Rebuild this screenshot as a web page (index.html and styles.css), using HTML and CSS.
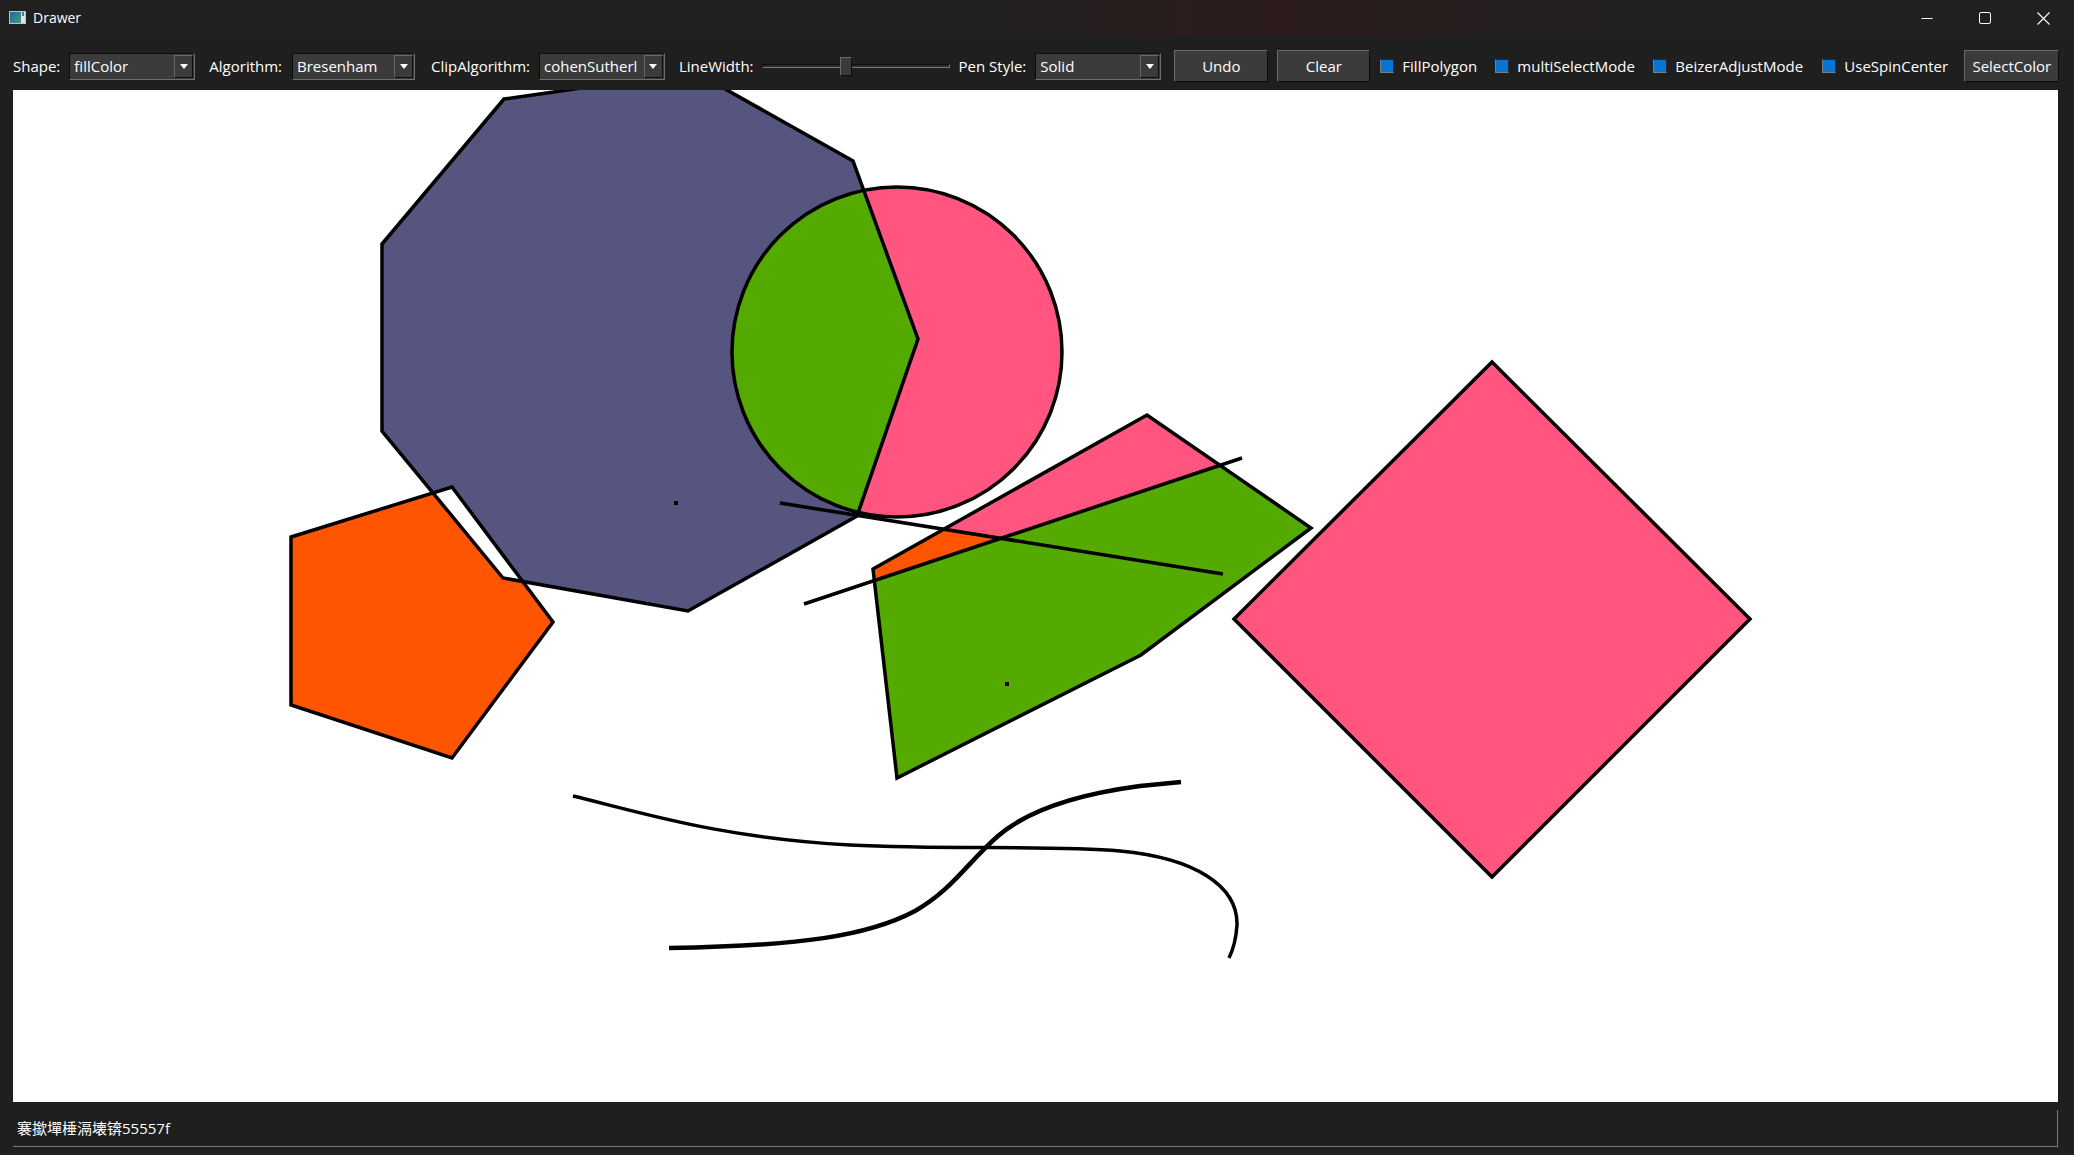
FILE: index.html
```html
<!DOCTYPE html>
<html lang="en">
<head>
<meta charset="utf-8">
<title>Drawer</title>
<link rel="stylesheet" href="styles.css">
</head>
<body>
<div class="window">
  <header class="titlebar">
    <svg class="app-icon" viewBox="0 0 17 13" width="17" height="13">
      <defs>
        <linearGradient id="icoGrad" x1="0" y1="0" x2="1" y2="1">
          <stop offset="0" stop-color="#2b63a6"/>
          <stop offset="1" stop-color="#3f9d72"/>
        </linearGradient>
      </defs>
      <rect x="0.5" y="0.5" width="16" height="12" fill="#dfe6e8" stroke="#b9c3c6"/>
      <rect x="1" y="1" width="11" height="11" fill="url(#icoGrad)"/>
      <rect x="13" y="1" width="2" height="4" fill="#2f8a8f"/>
    </svg>
    <span class="title">Drawer</span>
    <div class="controls">
      <span class="ctrl"><svg width="12" height="12" viewBox="0 0 12 12"><line x1="0.5" y1="6.5" x2="11.5" y2="6.5" stroke="#fff" stroke-width="1"/></svg></span>
      <span class="ctrl"><svg width="12" height="12" viewBox="0 0 12 12"><rect x="0.5" y="0.5" width="11" height="11" rx="1.5" fill="none" stroke="#fff" stroke-width="1"/></svg></span>
      <span class="ctrl"><svg width="13" height="13" viewBox="0 0 13 13"><path d="M0.5 0.5 L12.5 12.5 M12.5 0.5 L0.5 12.5" stroke="#fff" stroke-width="1.1"/></svg></span>
    </div>
  </header>

  <div class="toolbar">
    <span class="lbl">Shape:</span>
    <div class="combo sp-9 w-126"><span class="combo-text">fillColor</span><span class="combo-btn"><svg width="8" height="5" viewBox="0 0 8 5"><path d="M0 0 H8 L4 5 Z" fill="#fff"/></svg></span></div>

    <span class="lbl sp-14">Algorithm:</span>
    <div class="combo sp-10 w-123"><span class="combo-text">Bresenham</span><span class="combo-btn"><svg width="8" height="5" viewBox="0 0 8 5"><path d="M0 0 H8 L4 5 Z" fill="#fff"/></svg></span></div>

    <span class="lbl sp-16">ClipAlgorithm:</span>
    <div class="combo sp-9 w-126"><span class="combo-text">cohenSutherl</span><span class="combo-btn"><svg width="8" height="5" viewBox="0 0 8 5"><path d="M0 0 H8 L4 5 Z" fill="#fff"/></svg></span></div>

    <span class="lbl sp-14">LineWidth:</span>
    <div class="slider sp-8">
      <span class="groove groove-left"></span>
      <span class="handle"></span>
      <span class="groove groove-right"></span>
    </div>

    <span class="lbl sp-9">Pen Style:</span>
    <div class="combo sp-9 w-126"><span class="combo-text">Solid</span><span class="combo-btn"><svg width="8" height="5" viewBox="0 0 8 5"><path d="M0 0 H8 L4 5 Z" fill="#fff"/></svg></span></div>

    <button class="btn sp-13 w-94">Undo</button>
    <button class="btn sp-9 w-93">Clear</button>

    <label class="check sp-10 w-99"><span class="box"></span>FillPolygon</label>
    <label class="check sp-16 w-142"><span class="box"></span>multiSelectMode</label>
    <label class="check sp-16 w-153"><span class="box"></span>BeizerAdjustMode</label>
    <label class="check sp-16 w-126"><span class="box"></span>UseSpinCenter</label>

    <button class="btn sp-16 w-95">SelectColor</button>
  </div>

  <div class="canvas">
    <svg class="board" width="2045" height="1012" viewBox="13 90 2045 1012">
      <defs>
        <clipPath id="clipOct"><polygon points="504,99 695,72 853,161 918,339 857,516 688,611 503,578 382,431 382,244"/></clipPath>
        <clipPath id="clipQ"><polygon points="873,569 1147,415 1311,528 1141,655 897,778"/></clipPath>
      </defs>

      <!-- octagon, circle, pentagon fills -->
      <polygon points="504,99 695,72 853,161 918,339 857,516 688,611 503,578 382,431 382,244" fill="#55557f"/>
      <circle cx="897" cy="352" r="165" fill="#ff557f"/>
      <circle cx="897" cy="352" r="165" fill="#55aa00" clip-path="url(#clipOct)"/>
      <polygon points="291,537 452,487 553,622 452,758 291,705" fill="#ff5500"/>
      <polygon points="291,537 452,487 553,622 452,758 291,705" fill="#ffffff" clip-path="url(#clipOct)"/>

      <!-- quad shape fills -->
      <polygon points="873,569 1147,415 1311,528 1141,655 897,778" fill="#55aa00"/>
      <g clip-path="url(#clipQ)">
        <polygon points="944,529 1147,415 1220,465 1001,538" fill="#ff557f"/>
        <polygon points="860,560 944,529 1001,538 862,584" fill="#ff5500"/>
      </g>

      <!-- diamond -->
      <polygon points="1492,362 1750,619 1492,877 1234,619" fill="#ff557f" stroke="#000" stroke-width="3.5"/>

      <!-- outlines -->
      <g fill="none" stroke="#000" stroke-width="3.5" stroke-linejoin="miter">
        <polygon points="504,99 695,72 853,161 918,339 857,516 688,611 503,578 382,431 382,244"/>
        <circle cx="897" cy="352" r="165"/>
        <polygon points="291,537 452,487 553,622 452,758 291,705"/>
        <polygon points="873,569 1147,415 1311,528 1141,655 897,778"/>
        <line x1="804" y1="604" x2="1242" y2="458"/>
        <line x1="780" y1="503" x2="1223" y2="574"/>
        <path d="M573 796 C640 812 720 838 850 845 C950 850 1050 845 1120 851 C1195 858 1238 886 1237 925 C1236 940 1233 950 1229 958"/>
        <path stroke-width="4.5" d="M1181 782 L1140 786 C1080 794 1028 810 998 836 C968 862 952 890 915 911 C868 936 800 946 669 948"/>
      </g>

      <rect x="674" y="501" width="4" height="4" fill="#000"/>
      <rect x="1005" y="682" width="4" height="4" fill="#000"/>
    </svg>
  </div>

  <div class="status"><span class="status-text">褰撳墠棰滆壊锛55557f</span></div>
</div>
</body>
</html>
```

FILE: styles.css
```css
html, body {
  margin: 0;
  padding: 0;
}

body {
  width: 2074px;
  height: 1155px;
  overflow: hidden;
  background: #1f1f1f;
  color: #ffffff;
  font-family: "Open Sans", "Noto Sans", sans-serif;
}

.window {
  display: flex;
  flex-direction: column;
  width: 2074px;
  height: 1155px;
}

/* ---------- title bar ---------- */
.titlebar {
  height: 36px;
  display: flex;
  align-items: center;
  padding-left: 9px;
  background: linear-gradient(90deg, #202020 0px, #202020 950px, #2a1d1d 1200px, #2c1c1c 1280px, #251e1e 1480px, #202020 1700px);
}

.app-icon {
  display: block;
  margin-top: -2px;
}

.title {
  margin-left: 7px;
  font-size: 14px;
  line-height: 18px;
  color: #ffffff;
}

.controls {
  margin-left: auto;
  margin-right: 2px;
  display: flex;
}

.ctrl {
  width: 58px;
  height: 36px;
  display: flex;
  align-items: center;
  justify-content: center;
}

.ctrl svg {
  display: block;
}

/* ---------- toolbar ---------- */
.toolbar {
  display: flex;
  align-items: center;
  height: 32px;
  padding: 14px 0 8px 13px;
  background: #1f1f1f;
}

.lbl {
  font-size: 15px;
  line-height: 20px;
  white-space: nowrap;
}

.sp-8 { margin-left: 8px; }
.sp-9 { margin-left: 9px; }
.sp-10 { margin-left: 10px; }
.sp-13 { margin-left: 13px; }
.sp-14 { margin-left: 14px; }
.sp-16 { margin-left: 16px; }

.w-93 { width: 93px; }
.w-94 { width: 94px; }
.w-95 { width: 95px; }
.w-99 { width: 99px; }
.w-123 { width: 123px; }
.w-126 { width: 126px; }
.w-142 { width: 142px; }
.w-153 { width: 153px; }

.combo {
  display: flex;
  align-items: center;
  height: 27px;
  box-sizing: border-box;
  background: #3b3b3b;
  border: 1px solid;
  border-color: #0c0c0c #6e6e6e #6e6e6e #0c0c0c;
  padding-left: 4px;
  font-size: 15px;
}

.combo-text {
  flex: 1;
  white-space: nowrap;
  overflow: hidden;
  line-height: 20px;
}

.combo-btn {
  width: 19px;
  height: 23px;
  margin-right: 1px;
  box-sizing: border-box;
  border: 1px solid;
  border-color: #686868 #0c0c0c #0c0c0c #686868;
  background: #3b3b3b;
  display: flex;
  align-items: center;
  justify-content: center;
}

.combo-btn svg {
  display: block;
}

/* slider */
.slider {
  width: 188px;
  height: 20px;
  display: flex;
  align-items: center;
}

.groove {
  height: 4px;
  box-sizing: border-box;
  border-top: 1px solid #0c0c0c;
  border-bottom: 1px solid #7a7a7a;
  border-left: 1px solid #0c0c0c;
  background: #2a2a2a;
}

.groove-left {
  width: 78px;
}

.groove-right {
  flex: 1;
  border-left: none;
  border-right: 1px solid #7a7a7a;
}

.handle {
  width: 12px;
  height: 19px;
  box-sizing: border-box;
  background: #3b3b3b;
  border: 1px solid;
  border-color: #6a6a6a #0c0c0c #0c0c0c #6a6a6a;
}

/* buttons */
.btn {
  height: 32px;
  box-sizing: border-box;
  padding: 0;
  background: #3b3b3b;
  border: 1px solid;
  border-color: #6b6b6b #0b0b0b #0b0b0b #6b6b6b;
  color: #ffffff;
  font-family: "Open Sans", "Noto Sans", sans-serif;
  font-size: 15px;
  display: flex;
  align-items: center;
  justify-content: center;
}

/* check boxes */
.check {
  display: flex;
  align-items: center;
  gap: 8px;
  font-size: 15px;
  line-height: 20px;
  white-space: nowrap;
}

.box {
  flex: none;
  width: 14px;
  height: 14px;
  box-sizing: border-box;
  background: #0a74d6;
  border: 1px solid;
  border-color: #2a2a2a #2a2a2a #7c7c7c #7c7c7c;
}

/* ---------- canvas ---------- */
.canvas {
  margin-left: 13px;
  width: 2045px;
  height: 1012px;
  background: #ffffff;
}

.board {
  display: block;
}

/* ---------- status bar ---------- */
.status {
  margin: 8px 0 0 13px;
  width: 2045px;
  height: 37px;
  box-sizing: border-box;
  border-right: 1px solid #7a7a7a;
  border-bottom: 1px solid #7a7a7a;
  display: flex;
  align-items: center;
  padding-left: 4px;
}

.status-text {
  font-family: "Open Sans", "Noto Sans CJK SC", sans-serif;
  font-size: 15px;
  line-height: 20px;
  color: #ffffff;
}
```
